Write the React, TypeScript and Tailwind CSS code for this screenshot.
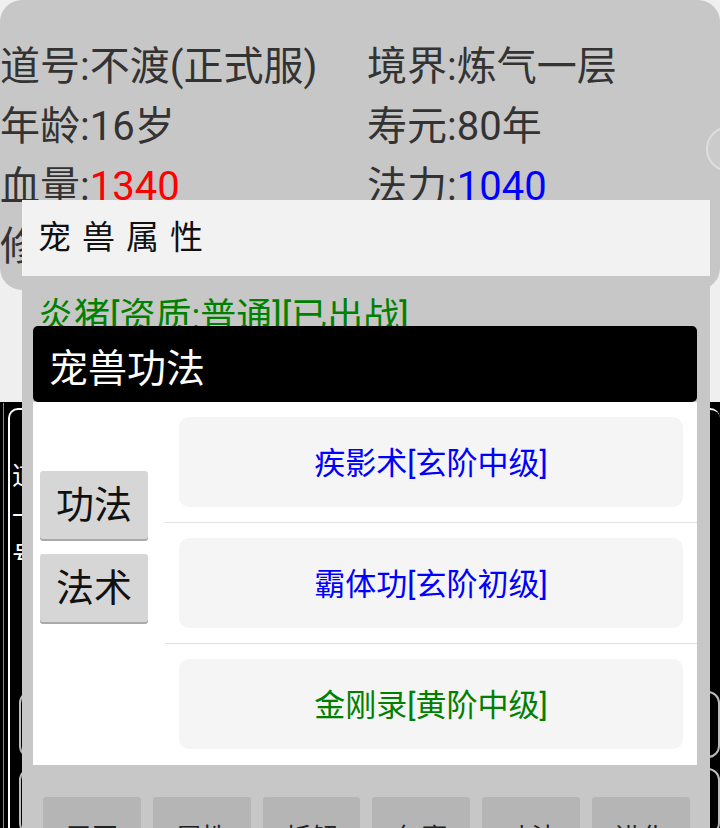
const stats = [
  { label: "道号:", value: "不渡(正式服)", color: "" },
  { label: "境界:", value: "炼气一层", color: "" },
  { label: "年龄:", value: "16岁", color: "" },
  { label: "寿元:", value: "80年", color: "" },
  { label: "血量:", value: "1340", color: "text-[#ff0000]" },
  { label: "法力:", value: "1040", color: "text-[#0000ff]" },
  { label: "修为:", value: "0/100", color: "" },
  { label: "灵石:", value: "200", color: "" },
];

const petSkills = [
  { name: "疾影术[玄阶中级]", color: "text-[#0000ff]" },
  { name: "霸体功[玄阶初级]", color: "text-[#0000ff]" },
  { name: "金刚录[黄阶中级]", color: "text-[#008000]" },
];

const petActions = ["召回", "属性", "拆解", "包裹", "功法", "进化"];

export default function App() {
  return (
    <div className="relative h-[828px] w-[720px] overflow-hidden bg-[#efefef] font-['Roboto','Noto_Sans_CJK_SC',sans-serif]">
      {/* Page behind the dialogs */}
      <div className="flex h-full flex-col">
        <div className="relative h-[290px] shrink-0 rounded-[22px] bg-[#c7c7c7] pt-[37px]">
          <div className="grid grid-cols-[367px_1fr]">
            {stats.map((s) => (
              <div key={s.label} className="h-[60px] whitespace-nowrap text-[40px] leading-[60px] text-[#333]">
                {s.label}
                <span className={s.color}>{s.value}</span>
              </div>
            ))}
          </div>
          <div className="absolute left-[706px] top-[126px] h-[46px] w-[46px] rounded-full border-2 border-[#dedede] bg-[#cbcbcb]" />
        </div>
        <div className="h-[112px] shrink-0" />
        <div className="flex-1 bg-black pl-[3px] pt-[1px]">
          <div className="h-full border-l border-[#8a8a8a] pl-[4px] pt-[5px]">
            <div className="h-[500px] rounded-t-[10px] border-l-2 border-t-2 border-white pl-[2px] pt-[46px]">
              <div className="text-[26px] leading-[40px] text-white">
                <div>道号:不渡(正式服)</div>
                <div>一层修士</div>
                <div>号令天下</div>
              </div>
              <div className="ml-[7px] mt-[115px] h-[67px] rounded-[12px] border-2 border-[#bbb]" />
              <div className="ml-[7px] mt-[10px] h-[67px] rounded-[12px] border-2 border-[#bbb]" />
            </div>
          </div>
        </div>
      </div>

      {/* 宠兽属性 dialog */}
      <div className="absolute left-[22px] top-[200px] flex h-[700px] w-[688px] flex-col bg-[#c7c7c7]">
        <div className="flex h-[76px] shrink-0 items-center bg-[#f2f2f2] pl-[16px] text-[33px] tracking-[11px] text-[#111]">
          宠兽属性
        </div>
        <div className="h-[521px] shrink-0 overflow-hidden px-[16px] pt-[16px] text-[36px] leading-[50px]">
          <div className="text-[#008000]">炎猪[资质:普通][已出战]</div>
          <div className="text-[#333]">等级:1</div>
          <div className="text-[#333]">血量:300</div>
        </div>
        <div className="flex gap-[12px] pl-[21px] pr-[20px]">
          {petActions.map((a) => (
            <div
              key={a}
              className="flex h-[82px] flex-1 items-center justify-center rounded-[3px] bg-[#b5b5b5] text-[26px] text-[#222]"
            >
              {a}
            </div>
          ))}
        </div>
      </div>

      {/* 宠兽功法 dialog */}
      <div className="absolute left-[33px] top-[326px] w-[664px]">
        <div className="flex h-[76px] items-center rounded-[5px] bg-black pl-[16px] pt-[10px] text-[39px] text-white">
          宠兽功法
        </div>
        <div className="flex h-[363px] bg-white">
          <div className="flex w-[132px] shrink-0 flex-col gap-[15px] pl-[7px] pt-[69px]">
            {["功法", "法术"].map((b) => (
              <div
                key={b}
                className="flex h-[68px] w-[108px] items-center justify-center rounded-[3px] bg-[#d6d6d6] text-[38px] text-[#111] shadow-[0_2px_0_#a9a9a9]"
              >
                {b}
              </div>
            ))}
          </div>
          <div className="flex flex-1 flex-col">
            {petSkills.map((s, i) => (
              <div
                key={s.name}
                className={`px-[14px] py-[15px] ${i < petSkills.length - 1 ? "border-b border-[#e2e2e2]" : ""}`}
              >
                <div className={`flex h-[90px] items-center justify-center rounded-[10px] bg-[#f5f5f5] pt-[4px] text-[31px] ${s.color}`}>
                  {s.name}
                </div>
              </div>
            ))}
          </div>
        </div>
      </div>
    </div>
  );
}
